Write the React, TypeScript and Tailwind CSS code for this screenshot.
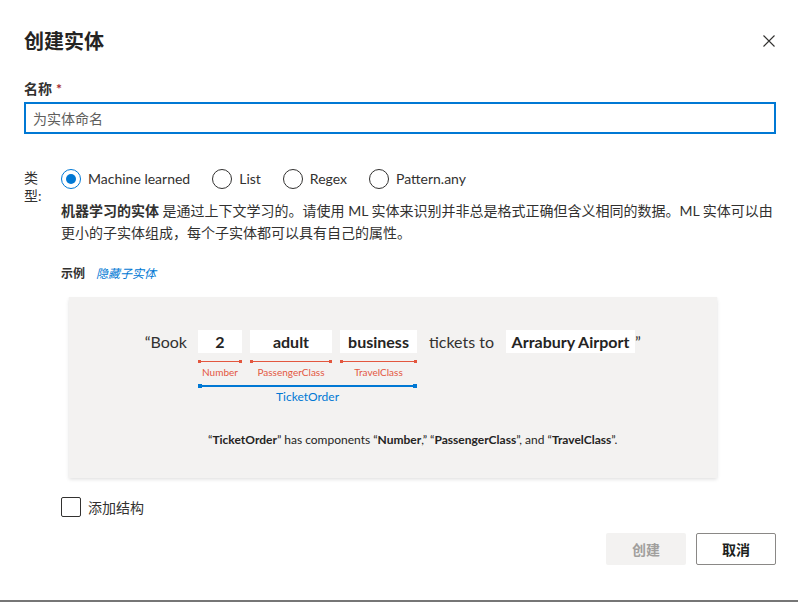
import React from 'react';

const font = "font-['Lato','Noto_Sans_CJK_SC',sans-serif]";

function Radio({ label, checked }: { label: string; checked?: boolean }) {
    return (
        <div className="flex items-center h-[20px]">
            <div
                className={`w-[20px] h-[20px] rounded-full border flex items-center justify-center ${checked ? 'border-[#0078d4]' : 'border-[#323130]'}`}
            >
                {checked && <div className="w-[10px] h-[10px] rounded-full bg-[#0078d4]" />}
            </div>
            <span className="ml-[7px] text-[14px] leading-[20px] text-[#323130]">{label}</span>
        </div>
    );
}

function Slot({ word, label, w }: { word: string; label: string; w: string }) {
    return (
        <div className={`flex flex-col items-center ${w}`}>
            <div className="w-full h-[23px] bg-white flex items-center justify-center text-[16px] font-bold text-[#252423]">
                {word}
            </div>
            {/* red bracket */}
            <div className="relative mt-[8px] h-[1px] w-full bg-[#e3573f]">
                <div className="absolute left-0 top-[-1px] w-[3px] h-[3px] bg-[#e3573f]" />
                <div className="absolute right-0 top-[-1px] w-[3px] h-[3px] bg-[#e3573f]" />
            </div>
            <div className="mt-[4px] text-[10px] leading-[12px] text-[#e3573f] whitespace-nowrap">{label}</div>
        </div>
    );
}

export default function App() {
    return (
        <div className={`w-full h-[602px] bg-white flex flex-col ${font} text-[#323130]`}>
            <div className="flex-1">
                {/* Header */}
                <div className="mt-[27px] h-[28px] flex items-center justify-between pl-[24px] pr-[23px]">
                    <h1 className="text-[20px] leading-[28px] font-bold text-[#252423]">创建实体</h1>
                    <svg width="12" height="12" viewBox="0 0 12 12" className="text-[#323130]">
                        <path d="M0.5 0.5 L11.5 11.5 M11.5 0.5 L0.5 11.5" stroke="currentColor" strokeWidth="1.1" fill="none" />
                    </svg>
                </div>

                {/* Name */}
                <div className="mt-[23px] ml-[24px] h-[20px] flex items-center text-[14px] font-bold text-[#323130]">
                    名称<span className="ml-[4px] text-[#a4262c]">*</span>
                </div>
                <div className="mt-[4px] ml-[24px] w-[752px] h-[32px] border-2 border-[#0078d4] flex items-center px-[7px] text-[14px] text-[#605e5c]">
                    为实体命名
                </div>

                {/* Type */}
                <div className="mt-[35px] ml-[24px] flex">
                    <div className="w-[37px] text-[14px] leading-[18px] text-[#323130]">
                        类<br />型:
                    </div>
                    <div className="flex flex-col">
                        <div className="flex items-center gap-[22px]">
                            <Radio label="Machine learned" checked />
                            <Radio label="List" />
                            <Radio label="Regex" />
                            <Radio label="Pattern.any" />
                        </div>
                        <p className="mt-[11px] text-[14px] leading-[22px] text-[#323130] whitespace-nowrap">
                            <span className="font-bold">机器学习的实体</span> 是通过上下文学习的。请使用 ML 实体来识别并非总是格式正确但含义相同的数据。ML 实体可以由
                            <br />
                            更小的子实体组成，每个子实体都可以具有自己的属性。
                        </p>

                        <div className="mt-[22px] flex items-center text-[12px] leading-[16px]">
                            <span className="font-bold text-[#323130]">示例</span>
                            <span className="ml-[11px] italic text-[#0078d4]">隐藏子实体</span>
                        </div>

                        {/* Example card */}
                        <div className="mt-[15px] ml-[8px] w-[648px] h-[181px] bg-[#f3f2f1] shadow-[0_1.6px_3.6px_rgba(0,0,0,0.13),0_0.3px_0.9px_rgba(0,0,0,0.11)] pt-[33px]">
                            <div className="flex items-start pl-[76px]">
                                <span className="w-[53px] h-[23px] flex items-center justify-end pr-[11px] text-[16px] text-[#323130]">
                                    “Book
                                </span>
                                <div className="flex flex-col">
                                    <div className="flex gap-[8px]">
                                        <Slot word="2" label="Number" w="w-[44px]" />
                                        <Slot word="adult" label="PassengerClass" w="w-[82px]" />
                                        <Slot word="business" label="TravelClass" w="w-[77px]" />
                                    </div>
                                    {/* blue bracket */}
                                    <div className="relative mt-[7px] h-[2px] w-full bg-[#0078d4]">
                                        <div className="absolute left-0 top-[-1px] w-[4px] h-[4px] bg-[#0078d4]" />
                                        <div className="absolute right-0 top-[-1px] w-[4px] h-[4px] bg-[#0078d4]" />
                                    </div>
                                    <div className="mt-[2px] text-center text-[12px] leading-[16px] text-[#0078d4]">TicketOrder</div>
                                </div>
                                <span className="w-[89px] h-[23px] flex items-center justify-center text-[16px] text-[#323130] whitespace-nowrap">
                                    tickets to
                                </span>
                                <div className="w-[129px] h-[23px] bg-white flex items-center justify-center text-[16px] font-bold text-[#252423] whitespace-nowrap">
                                    Arrabury Airport
                                </div>
                                <span className="h-[23px] flex items-center text-[16px] text-[#323130]">”</span>
                            </div>

                            <div className="mt-[27px] ml-[139px] h-[16px] text-[12px] leading-[16px] text-[#252423] whitespace-nowrap">
                                “<b>TicketOrder</b>” has components “<b>Number</b>,” “<b>PassengerClass</b>”, and “<b>TravelClass</b>”.
                            </div>
                        </div>

                        {/* Add structure */}
                        <div className="mt-[19px] flex items-center h-[20px]">
                            <div className="w-[20px] h-[20px] border border-[#323130] rounded-[2px]" />
                            <span className="ml-[7px] text-[14px] text-[#323130]">添加结构</span>
                        </div>
                    </div>
                </div>

                {/* Footer buttons */}
                <div className="mt-[16px] flex justify-end gap-[10px] pr-[22px]">
                    <button className="w-[80px] h-[32px] bg-[#f3f2f1] text-[#a19f9d] text-[14px] font-bold rounded-[2px]">创建</button>
                    <button className="w-[80px] h-[32px] bg-white border border-[#8a8886] text-[#201f1e] text-[14px] font-bold rounded-[2px]">取消</button>
                </div>
            </div>
            <div className="h-[2px] bg-[#767676]" />
        </div>
    );
}
